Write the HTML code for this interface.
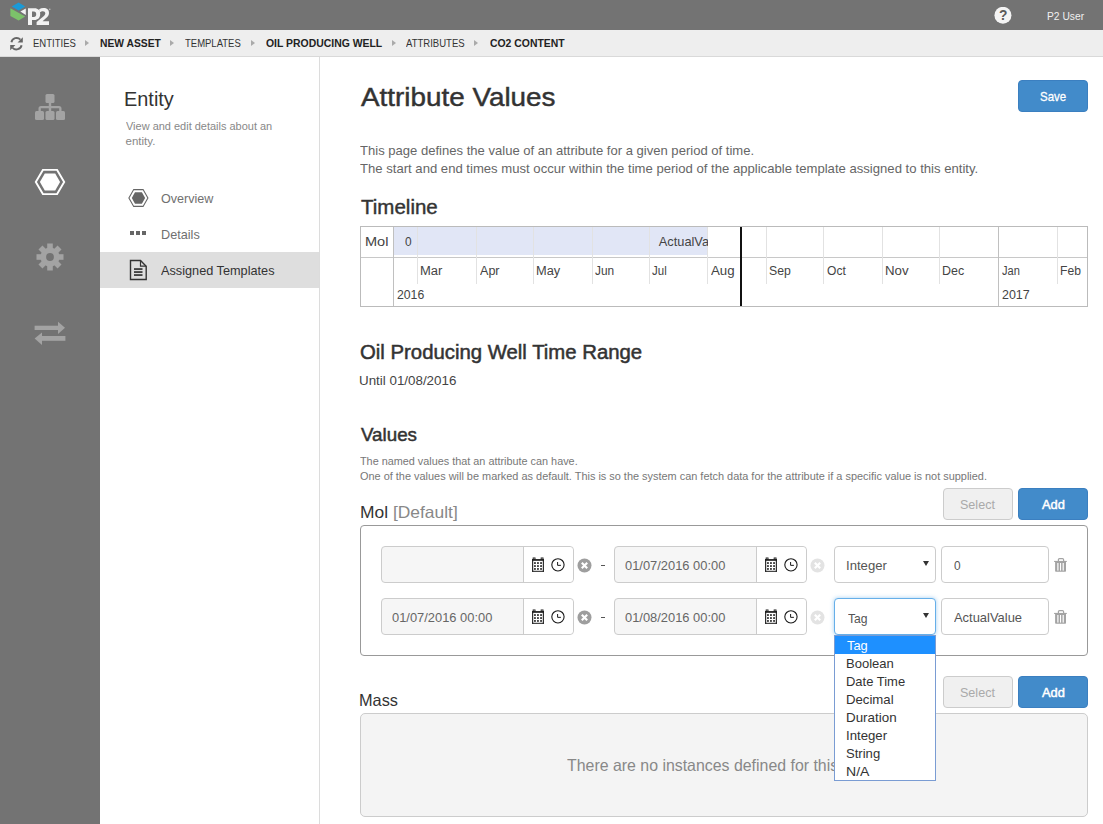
<!DOCTYPE html>
<html><head><meta charset="utf-8">
<style>
*{box-sizing:border-box;margin:0;padding:0}
html,body{width:1103px;height:824px;overflow:hidden;background:#fff;font-family:"Liberation Sans",sans-serif;color:#333}
.a{position:absolute}
.t{position:absolute;white-space:nowrap;line-height:1;transform-origin:0 0}
.arr{position:absolute;top:40px;width:0;height:0;border-top:3px solid transparent;border-bottom:3px solid transparent;border-left:4px solid #aaa}
.ml{position:absolute;width:1px;background:#e2e2e2}
.inp{position:absolute;border:1px solid #ccc;border-radius:4px;background:#f6f6f6;height:37px}
.inp .addon{position:absolute;right:0;top:0;width:50px;height:35px;background:#fff;border-left:1px solid #ccc;border-radius:0 4px 4px 0}
.sel{position:absolute;border:1px solid #ccc;border-radius:4px;background:#fff;height:37px;width:102px}
.val{position:absolute;border:1px solid #ccc;border-radius:4px;background:#fff;height:37px;width:108px}
.btn{position:absolute;border-radius:4px}
.primary{background:#428bca;border:1px solid #3b7fc0}
.dis{background:#f0f0f0;border:1px solid #ccc}
</style></head><body>

<div class="a" style="left:0;top:0;width:1103px;height:30px;background:#737373"></div>
<svg class="a" style="left:8px;top:0" width="46" height="30" viewBox="0 0 46 30">
  <path d="M3.8,6.4 L10.6,2.6 L17.2,6.4 L10.6,10.6 Z" fill="#1a9ad6"/>
  <path d="M2.4,8.2 L17.2,16.4 L10.6,20.5 L2.4,16 Z" fill="#7cc26a"/>
  <path d="M12.4,11.4 L17.8,8.4 L17.8,15 Z" fill="#f2f2f2"/>
  <path fill-rule="evenodd" fill="#f2f2f2" d="M20,25.1 V8.2 H26.5 C30.2,8.2 32.2,10.4 32.2,13.9 C32.2,17.6 30,19.9 26.3,19.9 H24 V25.1 Z M24,11.6 V16.9 H25.9 C27.4,16.9 28.2,15.9 28.2,14.2 C28.2,12.5 27.4,11.6 25.9,11.6 Z"/>
  <path fill="#f2f2f2" d="M28.6,25.1 L28.6,22 L35.6,16.2 C36.8,15.2 37.3,14.3 37.3,13.3 C37.3,12 36.3,11.3 34.9,11.3 C33.6,11.3 32.3,11.9 31.2,12.8 L31.2,9.2 C32.4,8.5 33.9,8.1 35.5,8.1 C39,8.1 41,10 41,13 C41,15.2 39.8,16.8 37.6,18.6 L34.6,21.3 L41,21.3 L41,25.1 Z"/>
  <circle cx="41.8" cy="9.2" r="0.7" fill="#ccc"/>
</svg>
<svg class="a" style="left:994px;top:7px" width="18" height="18" viewBox="0 0 18 18">
  <circle cx="8.95" cy="8.3" r="8.5" fill="#f4f4f4"/>
  <text x="9.1" y="13" text-anchor="middle" font-family="Liberation Sans" font-weight="bold" font-size="13.8" fill="#5a5a5a">?</text>
</svg>
<div class="a" style="left:0;top:30px;width:1103px;height:27px;background:#eeeeee;border-bottom:1px solid #d9d9d9"></div>
<svg class="a" style="left:9px;top:36px" width="15" height="15" viewBox="0 0 15 15">
  <path d="M2.4,6.2 A5.3,5.3 0 0 1 11.4,3.6" fill="none" stroke="#666" stroke-width="1.9"/>
  <polygon points="13.8,1.2 13.8,6.5 8.6,6.5" fill="#666"/>
  <path d="M12.6,9.2 A5.3,5.3 0 0 1 3.6,11.8" fill="none" stroke="#666" stroke-width="1.9"/>
  <polygon points="1.2,14.2 1.2,8.9 6.4,8.9" fill="#666"/>
</svg>
<div class="arr" style="left:85px"></div>
<div class="arr" style="left:170.3px"></div>
<div class="arr" style="left:250.8px"></div>
<div class="arr" style="left:391.5px"></div>
<div class="arr" style="left:474.2px"></div>

<div class="a" style="left:0;top:57px;width:100px;height:767px;background:#737373"></div>
<svg class="a" style="left:34px;top:93px" width="32" height="28" viewBox="0 0 32 28" fill="#a3a3a3">
  <rect x="11.5" y="1" width="9" height="9" rx="1.5"/>
  <rect x="1" y="18" width="9" height="9" rx="1.5"/>
  <rect x="11.5" y="18" width="9" height="9" rx="1.5"/>
  <rect x="22" y="18" width="9" height="9" rx="1.5"/>
  <rect x="14.8" y="9" width="2.4" height="10"/>
  <path d="M4.5,19 V15.5 Q4.5,13 7,13 H25 Q27.5,13 27.5,15.5 V19 H25.2 V15.3 H6.8 V19 Z"/>
</svg>
<svg class="a" style="left:34px;top:168px" width="32" height="28" viewBox="0 0 32 28">
  <polygon points="8.9,1.9 23.1,1.9 30.2,14 23.1,26.1 8.9,26.1 1.8,14" fill="none" stroke="#fff" stroke-width="1.9"/>
  <polygon points="10.8,5.4 21.2,5.4 26.1,14 21.2,22.6 10.8,22.6 5.9,14" fill="#fff"/>
</svg>
<svg class="a" style="left:36px;top:243px" width="28" height="28" viewBox="0 0 28 28">
  <g fill="#a3a3a3" transform="translate(14,14)">
    <circle r="9.5"/>
    <rect x="-2.8" y="-13.5" width="5.6" height="27"/>
    <rect x="-2.8" y="-13.5" width="5.6" height="27" transform="rotate(45)"/>
    <rect x="-2.8" y="-13.5" width="5.6" height="27" transform="rotate(90)"/>
    <rect x="-2.8" y="-13.5" width="5.6" height="27" transform="rotate(135)"/>
  </g>
  <circle cx="14" cy="14" r="3.9" fill="#737373"/>
</svg>
<svg class="a" style="left:34px;top:320px" width="32" height="26" viewBox="0 0 32 26" fill="#a3a3a3">
  <rect x="0.6" y="5.7" width="24" height="4.3"/>
  <polygon points="24,1.7 31,7.85 24,14"/>
  <rect x="7" y="16" width="24.4" height="4.8"/>
  <polygon points="8,12.6 0.6,18.4 8,25"/>
</svg>

<div class="a" style="left:100px;top:57px;width:220px;height:767px;background:#fff;border-right:1px solid #dcdcdc"></div>
<div class="a" style="left:100px;top:252px;width:219px;height:36px;background:#dedede"></div>
<svg class="a" style="left:128px;top:188px" width="21" height="20" viewBox="0 0 21 20">
  <polygon points="5.7,1.6 15.1,1.6 19.9,10 15.1,18.4 5.7,18.4 0.9,10" fill="none" stroke="#666" stroke-width="1.1"/>
  <polygon points="7,4.2 13.9,4.2 17.1,10 13.9,15.8 7,15.8 3.8,10" fill="#666"/>
</svg>
<svg class="a" style="left:130px;top:230px" width="17" height="6" viewBox="0 0 17 6" fill="#666">
  <rect x="0" y="1" width="4" height="4"/><rect x="6" y="1" width="4" height="4"/><rect x="12" y="1" width="4" height="4"/>
</svg>
<svg class="a" style="left:129px;top:259px" width="19" height="22" viewBox="0 0 19 22">
  <path d="M1.5,1.5 H11.5 L17.2,7.2 V20.5 H1.5 Z" fill="none" stroke="#333" stroke-width="1.4"/>
  <path d="M11.5,1.5 V7.2 H17.2" fill="none" stroke="#333" stroke-width="1.2"/>
  <rect x="5" y="9.2" width="8.5" height="1.7" fill="#333"/>
  <rect x="5" y="12.2" width="8.5" height="1.7" fill="#333"/>
  <rect x="5" y="15.2" width="8.5" height="1.7" fill="#333"/>
</svg>

<div class="btn primary" style="left:1018px;top:80px;width:70px;height:32px"></div>

<div class="a" style="left:360px;top:226px;width:728px;height:81px;border:1px solid #bbb"></div>
<div class="a" style="left:394px;top:227px;width:314px;height:28px;background:#e1e6f6"></div>
<div class="a" style="left:361px;top:257px;width:726px;height:1px;background:#c8c8c8"></div>
<div class="a" style="left:393px;top:227px;width:1px;height:79px;background:#c0c0c0"></div>
<div class="ml" style="left:417px;top:227px;height:57px"></div>
<div class="ml" style="left:476px;top:227px;height:57px"></div>
<div class="ml" style="left:533px;top:227px;height:57px"></div>
<div class="ml" style="left:592px;top:227px;height:57px"></div>
<div class="ml" style="left:649px;top:227px;height:57px"></div>
<div class="ml" style="left:707px;top:227px;height:57px"></div>
<div class="ml" style="left:766px;top:227px;height:57px"></div>
<div class="ml" style="left:823px;top:227px;height:57px"></div>
<div class="ml" style="left:882px;top:227px;height:57px"></div>
<div class="ml" style="left:939px;top:227px;height:57px"></div>
<div class="a" style="left:998px;top:227px;width:1px;height:79px;background:#c0c0c0"></div>
<div class="ml" style="left:1057px;top:227px;height:57px"></div>
<div class="a" style="left:740px;top:227px;width:2px;height:79px;background:#111"></div>
<div class="a" style="left:658px;top:227px;width:50px;height:28px;overflow:hidden"><div class="t" style="left:0.8px;top:8.7px;font-size:12.8px;color:#444">ActualValue</div></div>

<div class="btn dis" style="left:943px;top:488px;width:70px;height:32px"></div>
<div class="btn primary" style="left:1018px;top:488px;width:70px;height:32px"></div>
<div class="a" style="left:360px;top:525px;width:728px;height:131px;border:1px solid #999;border-radius:4px"></div>
<div class="inp" style="left:381px;top:546px;width:193px"><div class="addon"></div></div><svg class="a" style="left:532px;top:557px" width="13" height="16" viewBox="0 0 13 16"><g fill="#1a1a1a"><rect x="1.1" y="0.9" width="2" height="1.3" fill="none" stroke="#1a1a1a" stroke-width="0.8"/><rect x="9.1" y="0.9" width="2" height="1.3" fill="none" stroke="#1a1a1a" stroke-width="0.8"/><rect x="0.1" y="2.1" width="11.8" height="1.7"/><rect x="0.1" y="2.1" width="1.1" height="12.7"/><rect x="10.8" y="2.1" width="1.1" height="12.7"/><rect x="0.1" y="13.8" width="11.8" height="1"/><rect x="2.1" y="5.2" width="1.7" height="1.7"/><rect x="5.1" y="5.2" width="1.7" height="1.7"/><rect x="8.2" y="5.2" width="1.7" height="1.7"/><rect x="2.1" y="8.2" width="1.7" height="1.7"/><rect x="5.1" y="8.2" width="1.7" height="1.7"/><rect x="8.2" y="8.2" width="1.7" height="1.7"/><rect x="2.1" y="11.1" width="1.7" height="1.7"/><rect x="5.1" y="11.1" width="1.7" height="1.7"/><rect x="8.2" y="11.1" width="1.7" height="1.7"/></g></svg><svg class="a" style="left:551px;top:558px" width="14" height="14" viewBox="0 0 14 14"><circle cx="6.95" cy="6.85" r="6.15" fill="none" stroke="#1a1a1a" stroke-width="1.1"/><path d="M6.6,4 V7.35 H9.9" fill="none" stroke="#1a1a1a" stroke-width="1"/></svg><svg class="a" style="left:577px;top:557.7px" width="15" height="15" viewBox="0 0 15 15"><circle cx="7.5" cy="7.5" r="7" fill="#9e9e9e"/><path d="M4.8,4.8 L10.2,10.2 M10.2,4.8 L4.8,10.2" stroke="#fff" stroke-width="2.2"/></svg><div class="a" style="left:601px;top:564.5px;width:4px;height:1px;background:#555"></div><div class="inp" style="left:614px;top:546px;width:193px"><div class="addon"></div></div><svg class="a" style="left:765px;top:557px" width="13" height="16" viewBox="0 0 13 16"><g fill="#1a1a1a"><rect x="1.1" y="0.9" width="2" height="1.3" fill="none" stroke="#1a1a1a" stroke-width="0.8"/><rect x="9.1" y="0.9" width="2" height="1.3" fill="none" stroke="#1a1a1a" stroke-width="0.8"/><rect x="0.1" y="2.1" width="11.8" height="1.7"/><rect x="0.1" y="2.1" width="1.1" height="12.7"/><rect x="10.8" y="2.1" width="1.1" height="12.7"/><rect x="0.1" y="13.8" width="11.8" height="1"/><rect x="2.1" y="5.2" width="1.7" height="1.7"/><rect x="5.1" y="5.2" width="1.7" height="1.7"/><rect x="8.2" y="5.2" width="1.7" height="1.7"/><rect x="2.1" y="8.2" width="1.7" height="1.7"/><rect x="5.1" y="8.2" width="1.7" height="1.7"/><rect x="8.2" y="8.2" width="1.7" height="1.7"/><rect x="2.1" y="11.1" width="1.7" height="1.7"/><rect x="5.1" y="11.1" width="1.7" height="1.7"/><rect x="8.2" y="11.1" width="1.7" height="1.7"/></g></svg><svg class="a" style="left:784px;top:558px" width="14" height="14" viewBox="0 0 14 14"><circle cx="6.95" cy="6.85" r="6.15" fill="none" stroke="#1a1a1a" stroke-width="1.1"/><path d="M6.6,4 V7.35 H9.9" fill="none" stroke="#1a1a1a" stroke-width="1"/></svg><svg class="a" style="left:810px;top:557.7px" width="15" height="15" viewBox="0 0 15 15"><circle cx="7.5" cy="7.5" r="7" fill="#e3e3e3"/><path d="M4.8,4.8 L10.2,10.2 M10.2,4.8 L4.8,10.2" stroke="#fff" stroke-width="2.2"/></svg><div class="sel" style="left:834px;top:546px;"></div><div class="a" style="left:922.5px;top:561px;width:0;height:0;border-left:3.5px solid transparent;border-right:3.5px solid transparent;border-top:5.5px solid #333"></div><div class="val" style="left:941px;top:546px"></div><svg class="a" style="left:1054px;top:557px" width="14" height="16" viewBox="0 0 14 16"><path d="M4.4,4 V2.7 Q4.4,1.6 5.5,1.6 H8.5 Q9.6,1.6 9.6,2.7 V4" fill="none" stroke="#a3a3a3" stroke-width="1.2"/><rect x="0.1" y="3.9" width="12.7" height="1.1" fill="#a3a3a3"/><path d="M1.1,5 H12 V14 Q12,14.8 11.2,14.8 H1.9 Q1.1,14.8 1.1,14 Z" fill="#a3a3a3"/><g fill="#fff"><rect x="3.3" y="6" width="1.2" height="7.6"/><rect x="6" y="6" width="1.1" height="7.6"/><rect x="8.6" y="6" width="1.2" height="7.6"/></g></svg><div class="inp" style="left:381px;top:598px;width:193px"><div class="addon"></div></div><svg class="a" style="left:532px;top:609px" width="13" height="16" viewBox="0 0 13 16"><g fill="#1a1a1a"><rect x="1.1" y="0.9" width="2" height="1.3" fill="none" stroke="#1a1a1a" stroke-width="0.8"/><rect x="9.1" y="0.9" width="2" height="1.3" fill="none" stroke="#1a1a1a" stroke-width="0.8"/><rect x="0.1" y="2.1" width="11.8" height="1.7"/><rect x="0.1" y="2.1" width="1.1" height="12.7"/><rect x="10.8" y="2.1" width="1.1" height="12.7"/><rect x="0.1" y="13.8" width="11.8" height="1"/><rect x="2.1" y="5.2" width="1.7" height="1.7"/><rect x="5.1" y="5.2" width="1.7" height="1.7"/><rect x="8.2" y="5.2" width="1.7" height="1.7"/><rect x="2.1" y="8.2" width="1.7" height="1.7"/><rect x="5.1" y="8.2" width="1.7" height="1.7"/><rect x="8.2" y="8.2" width="1.7" height="1.7"/><rect x="2.1" y="11.1" width="1.7" height="1.7"/><rect x="5.1" y="11.1" width="1.7" height="1.7"/><rect x="8.2" y="11.1" width="1.7" height="1.7"/></g></svg><svg class="a" style="left:551px;top:610px" width="14" height="14" viewBox="0 0 14 14"><circle cx="6.95" cy="6.85" r="6.15" fill="none" stroke="#1a1a1a" stroke-width="1.1"/><path d="M6.6,4 V7.35 H9.9" fill="none" stroke="#1a1a1a" stroke-width="1"/></svg><svg class="a" style="left:577px;top:609.7px" width="15" height="15" viewBox="0 0 15 15"><circle cx="7.5" cy="7.5" r="7" fill="#9e9e9e"/><path d="M4.8,4.8 L10.2,10.2 M10.2,4.8 L4.8,10.2" stroke="#fff" stroke-width="2.2"/></svg><div class="a" style="left:601px;top:616.5px;width:4px;height:1px;background:#555"></div><div class="inp" style="left:614px;top:598px;width:193px"><div class="addon"></div></div><svg class="a" style="left:765px;top:609px" width="13" height="16" viewBox="0 0 13 16"><g fill="#1a1a1a"><rect x="1.1" y="0.9" width="2" height="1.3" fill="none" stroke="#1a1a1a" stroke-width="0.8"/><rect x="9.1" y="0.9" width="2" height="1.3" fill="none" stroke="#1a1a1a" stroke-width="0.8"/><rect x="0.1" y="2.1" width="11.8" height="1.7"/><rect x="0.1" y="2.1" width="1.1" height="12.7"/><rect x="10.8" y="2.1" width="1.1" height="12.7"/><rect x="0.1" y="13.8" width="11.8" height="1"/><rect x="2.1" y="5.2" width="1.7" height="1.7"/><rect x="5.1" y="5.2" width="1.7" height="1.7"/><rect x="8.2" y="5.2" width="1.7" height="1.7"/><rect x="2.1" y="8.2" width="1.7" height="1.7"/><rect x="5.1" y="8.2" width="1.7" height="1.7"/><rect x="8.2" y="8.2" width="1.7" height="1.7"/><rect x="2.1" y="11.1" width="1.7" height="1.7"/><rect x="5.1" y="11.1" width="1.7" height="1.7"/><rect x="8.2" y="11.1" width="1.7" height="1.7"/></g></svg><svg class="a" style="left:784px;top:610px" width="14" height="14" viewBox="0 0 14 14"><circle cx="6.95" cy="6.85" r="6.15" fill="none" stroke="#1a1a1a" stroke-width="1.1"/><path d="M6.6,4 V7.35 H9.9" fill="none" stroke="#1a1a1a" stroke-width="1"/></svg><svg class="a" style="left:810px;top:609.7px" width="15" height="15" viewBox="0 0 15 15"><circle cx="7.5" cy="7.5" r="7" fill="#e3e3e3"/><path d="M4.8,4.8 L10.2,10.2 M10.2,4.8 L4.8,10.2" stroke="#fff" stroke-width="2.2"/></svg><div class="sel" style="left:834px;top:598px;border-color:#66afe9;box-shadow:0 0 4px rgba(102,175,233,.6);"></div><div class="a" style="left:922.5px;top:613px;width:0;height:0;border-left:3.5px solid transparent;border-right:3.5px solid transparent;border-top:5.5px solid #333"></div><div class="val" style="left:941px;top:598px"></div><svg class="a" style="left:1054px;top:609px" width="14" height="16" viewBox="0 0 14 16"><path d="M4.4,4 V2.7 Q4.4,1.6 5.5,1.6 H8.5 Q9.6,1.6 9.6,2.7 V4" fill="none" stroke="#a3a3a3" stroke-width="1.2"/><rect x="0.1" y="3.9" width="12.7" height="1.1" fill="#a3a3a3"/><path d="M1.1,5 H12 V14 Q12,14.8 11.2,14.8 H1.9 Q1.1,14.8 1.1,14 Z" fill="#a3a3a3"/><g fill="#fff"><rect x="3.3" y="6" width="1.2" height="7.6"/><rect x="6" y="6" width="1.1" height="7.6"/><rect x="8.6" y="6" width="1.2" height="7.6"/></g></svg>
<div class="btn dis" style="left:943px;top:676px;width:70px;height:32px"></div>
<div class="btn primary" style="left:1018px;top:676px;width:70px;height:32px"></div>
<div class="a" style="left:360px;top:713px;width:728px;height:104px;background:#f4f4f4;border:1px solid #ccc;border-radius:5px"></div>

<div class="t" style="left:1047.09px;top:10.59px;font-size:11.3px;font-weight:normal;color:#f0f0f0;transform:scaleX(0.9100);">P2 User</div>
<div class="t" style="left:32.55px;top:37.98px;font-size:11.2px;font-weight:normal;color:#333;transform:scaleX(0.8510);">ENTITIES</div>
<div class="t" style="left:99.90px;top:37.98px;font-size:11.2px;font-weight:bold;color:#222;transform:scaleX(0.9212);">NEW ASSET</div>
<div class="t" style="left:185.00px;top:37.98px;font-size:11.2px;font-weight:normal;color:#333;transform:scaleX(0.8485);">TEMPLATES</div>
<div class="t" style="left:265.50px;top:37.98px;font-size:11.2px;font-weight:bold;color:#222;transform:scaleX(0.9320);">OIL PRODUCING WELL</div>
<div class="t" style="left:406.20px;top:37.98px;font-size:11.2px;font-weight:normal;color:#333;transform:scaleX(0.8522);">ATTRIBUTES</div>
<div class="t" style="left:489.60px;top:37.98px;font-size:11.2px;font-weight:bold;color:#222;transform:scaleX(0.9300);">CO2 CONTENT</div>
<div class="t" style="left:124.48px;top:90.42px;font-size:19.5px;font-weight:normal;color:#333;transform:scaleX(1.0208);">Entity</div>
<div class="t" style="left:125.50px;top:120.92px;font-size:11.5px;font-weight:normal;color:#888;transform:scaleX(0.9542);">View and edit details about an</div>
<div class="t" style="left:125.50px;top:135.62px;font-size:11.5px;font-weight:normal;color:#888;transform:scaleX(1.0000);">entity.</div>
<div class="t" style="left:161.30px;top:191.98px;font-size:13.2px;font-weight:normal;color:#707070;transform:scaleX(0.9527);">Overview</div>
<div class="t" style="left:160.84px;top:227.68px;font-size:13.2px;font-weight:normal;color:#707070;transform:scaleX(0.9615);">Details</div>
<div class="t" style="left:161.30px;top:263.78px;font-size:13.2px;font-weight:normal;color:#333;transform:scaleX(0.9636);">Assigned Templates</div>
<div class="t" style="left:361.00px;top:84.28px;font-size:26.5px;font-weight:normal;-webkit-text-stroke:0.45px #333;color:#333;transform:scaleX(1.0508);">Attribute Values</div>
<div class="t" style="left:1040.00px;top:89.93px;font-size:13.5px;font-weight:normal;-webkit-text-stroke:0.3px #fff;color:#fff;transform:scaleX(0.8484);">Save</div>
<div class="t" style="left:360.30px;top:143.75px;font-size:13px;font-weight:normal;color:#666;transform:scaleX(1.0043);">This page defines the value of an attribute for a given period of time.</div>
<div class="t" style="left:360.30px;top:161.65px;font-size:13px;font-weight:normal;color:#666;transform:scaleX(1.0080);">The start and end times must occur within the time period of the applicable template assigned to this entity.</div>
<div class="t" style="left:360.50px;top:198.43px;font-size:19.5px;font-weight:normal;-webkit-text-stroke:0.4px #333;color:#333;transform:scaleX(1.0521);">Timeline</div>
<div class="t" style="left:365.46px;top:235.72px;font-size:12.8px;font-weight:normal;color:#444;transform:scaleX(1.1368);">Mol</div>
<div class="t" style="left:404.50px;top:235.72px;font-size:12.8px;font-weight:normal;color:#444;transform:scaleX(0.9286);">0</div>
<div class="t" style="left:420.16px;top:265.38px;font-size:12.5px;font-weight:normal;color:#444;transform:scaleX(1.0381);">Mar</div>
<div class="t" style="left:479.80px;top:265.38px;font-size:12.5px;font-weight:normal;color:#444;transform:scaleX(1.0050);">Apr</div>
<div class="t" style="left:535.57px;top:265.38px;font-size:12.5px;font-weight:normal;color:#444;transform:scaleX(1.0261);">May</div>
<div class="t" style="left:595.20px;top:265.38px;font-size:12.5px;font-weight:normal;color:#444;transform:scaleX(0.9500);">Jun</div>
<div class="t" style="left:652.00px;top:265.38px;font-size:12.5px;font-weight:normal;color:#444;transform:scaleX(0.9188);">Jul</div>
<div class="t" style="left:711.00px;top:265.38px;font-size:12.5px;font-weight:normal;color:#444;transform:scaleX(1.0636);">Aug</div>
<div class="t" style="left:769.12px;top:265.38px;font-size:12.5px;font-weight:normal;color:#444;transform:scaleX(0.9810);">Sep</div>
<div class="t" style="left:827.20px;top:265.38px;font-size:12.5px;font-weight:normal;color:#444;transform:scaleX(0.9650);">Oct</div>
<div class="t" style="left:885.44px;top:265.38px;font-size:12.5px;font-weight:normal;color:#444;transform:scaleX(1.0619);">Nov</div>
<div class="t" style="left:942.40px;top:265.38px;font-size:12.5px;font-weight:normal;color:#444;transform:scaleX(0.9952);">Dec</div>
<div class="t" style="left:1001.70px;top:265.38px;font-size:12.5px;font-weight:normal;color:#444;transform:scaleX(0.8850);">Jan</div>
<div class="t" style="left:1059.93px;top:265.38px;font-size:12.5px;font-weight:normal;color:#444;transform:scaleX(0.9700);">Feb</div>
<div class="t" style="left:397.20px;top:288.68px;font-size:12.5px;font-weight:normal;color:#444;transform:scaleX(0.9786);">2016</div>
<div class="t" style="left:1001.70px;top:288.68px;font-size:12.5px;font-weight:normal;color:#444;transform:scaleX(0.9963);">2017</div>
<div class="t" style="left:360.40px;top:342.00px;font-size:20px;font-weight:normal;-webkit-text-stroke:0.5px #333;color:#333;transform:scaleX(1.0166);">Oil Producing Well Time Range</div>
<div class="t" style="left:359.37px;top:374.25px;font-size:13px;font-weight:normal;color:#444;transform:scaleX(1.0280);">Until 01/08/2016</div>
<div class="t" style="left:361.30px;top:424.85px;font-size:19px;font-weight:normal;-webkit-text-stroke:0.5px #333;color:#333;transform:scaleX(0.9877);">Values</div>
<div class="t" style="left:360.30px;top:455.65px;font-size:11px;font-weight:normal;color:#777;transform:scaleX(0.9859);">The named values that an attribute can have.</div>
<div class="t" style="left:360.30px;top:470.65px;font-size:11px;font-weight:normal;color:#777;transform:scaleX(0.9929);">One of the values will be marked as default. This is so the system can fetch data for the attribute if a specific value is not supplied.</div>
<div class="t" style="left:960.03px;top:497.95px;font-size:13px;font-weight:normal;color:#aaa;transform:scaleX(0.9657);">Select</div>
<div class="t" style="left:1041.60px;top:497.52px;font-size:13.5px;font-weight:normal;-webkit-text-stroke:0.5px #fff;color:#fff;transform:scaleX(0.9542);">Add</div>
<div class="t" style="left:360.24px;top:503.98px;font-size:16.5px;font-weight:normal;color:#333;transform:scaleX(1.0560);">Mol <span style="color:#888">[Default]</span></div>
<div class="t" style="left:625.20px;top:558.95px;font-size:13px;font-weight:normal;color:#666;transform:scaleX(0.9911);">01/07/2016 00:00</div>
<div class="t" style="left:845.99px;top:558.85px;font-size:13px;font-weight:normal;color:#555;transform:scaleX(1.0100);">Integer</div>
<div class="t" style="left:954.00px;top:558.95px;font-size:13px;font-weight:normal;color:#555;transform:scaleX(0.9143);">0</div>
<div class="t" style="left:392.40px;top:611.25px;font-size:13px;font-weight:normal;color:#666;transform:scaleX(0.9911);">01/07/2016 00:00</div>
<div class="t" style="left:625.20px;top:611.25px;font-size:13px;font-weight:normal;color:#666;transform:scaleX(0.9911);">01/08/2016 00:00</div>
<div class="t" style="left:847.50px;top:611.55px;font-size:13px;font-weight:normal;color:#555;transform:scaleX(0.9333);">Tag</div>
<div class="t" style="left:954.00px;top:611.25px;font-size:13px;font-weight:normal;color:#555;transform:scaleX(0.9941);">ActualValue</div>
<div class="t" style="left:359.41px;top:691.88px;font-size:16.5px;font-weight:normal;color:#333;transform:scaleX(0.9895);">Mass</div>
<div class="t" style="left:960.03px;top:685.95px;font-size:13px;font-weight:normal;color:#aaa;transform:scaleX(0.9657);">Select</div>
<div class="t" style="left:1041.60px;top:685.52px;font-size:13.5px;font-weight:normal;-webkit-text-stroke:0.5px #fff;color:#fff;transform:scaleX(0.9542);">Add</div>
<div class="t" style="left:567.40px;top:757.27px;font-size:16.5px;font-weight:normal;color:#888;transform:scaleX(0.9630);">There are no instances defined for this</div>
<div class="a" style="left:834px;top:635px;width:102px;height:146px;background:#fff;border:1px solid #7a9cd3"></div>
<div class="a" style="left:835px;top:636px;width:100px;height:18px;background:#1e90ff"></div>

<div class="t" style="left:847.30px;top:638.95px;font-size:13px;font-weight:normal;color:#fff;transform:scaleX(0.9905);">Tag</div>
<div class="t" style="left:846.30px;top:656.95px;font-size:13px;font-weight:normal;color:#333;transform:scaleX(1.0022);">Boolean</div>
<div class="t" style="left:846.30px;top:674.95px;font-size:13px;font-weight:normal;color:#333;transform:scaleX(0.9983);">Date Time</div>
<div class="t" style="left:846.29px;top:692.95px;font-size:13px;font-weight:normal;color:#333;transform:scaleX(1.0133);">Decimal</div>
<div class="t" style="left:846.27px;top:710.95px;font-size:13px;font-weight:normal;color:#333;transform:scaleX(1.0292);">Duration</div>
<div class="t" style="left:846.28px;top:728.95px;font-size:13px;font-weight:normal;color:#333;transform:scaleX(1.0150);">Integer</div>
<div class="t" style="left:846.29px;top:746.95px;font-size:13px;font-weight:normal;color:#333;transform:scaleX(1.0061);">String</div>
<div class="t" style="left:846.22px;top:764.95px;font-size:13px;font-weight:normal;color:#333;transform:scaleX(1.0810);">N/A</div>
</body></html>
